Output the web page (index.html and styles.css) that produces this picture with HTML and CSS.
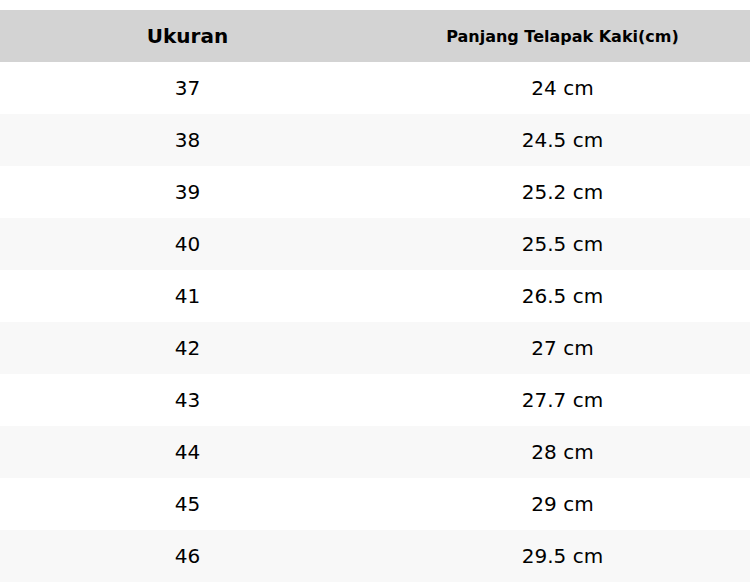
FILE: index.html
```html
<!DOCTYPE html>
<html>
<head>
<meta charset="utf-8">
<link rel="stylesheet" href="styles.css">
</head>
<body>
<table class="size-table">
  <thead>
    <tr><th class="h-main">Ukuran</th><th class="h-sub">Panjang Telapak Kaki(cm)</th></tr>
  </thead>
  <tbody>
    <tr><td>37</td><td>24 cm</td></tr>
    <tr><td>38</td><td>24.5 cm</td></tr>
    <tr><td>39</td><td>25.2 cm</td></tr>
    <tr><td>40</td><td>25.5 cm</td></tr>
    <tr><td>41</td><td>26.5 cm</td></tr>
    <tr><td>42</td><td>27 cm</td></tr>
    <tr><td>43</td><td>27.7 cm</td></tr>
    <tr><td>44</td><td>28 cm</td></tr>
    <tr><td>45</td><td>29 cm</td></tr>
    <tr><td>46</td><td>29.5 cm</td></tr>
  </tbody>
</table>
</body>
</html>
```
FILE: styles.css
```css
html, body {
  margin: 0;
  padding: 0;
  background: #ffffff;
}
body {
  padding-top: 10px;
  font-family: "DejaVu Sans", sans-serif;
  color: #000;
}
.size-table {
  width: 750px;
  border-collapse: collapse;
  table-layout: fixed;
}
.size-table th,
.size-table td {
  height: 52px;
  padding: 0;
  text-align: center;
  vertical-align: middle;
  width: 50%;
}
.size-table thead tr {
  background: #d3d3d3;
}
.h-main {
  font-size: 20px;
  font-weight: bold;
}
.h-sub {
  font-size: 16px;
  font-weight: bold;
}
.size-table td {
  font-size: 20px;
}
.size-table tbody tr:nth-child(even) {
  background: #f8f8f8;
}
```
